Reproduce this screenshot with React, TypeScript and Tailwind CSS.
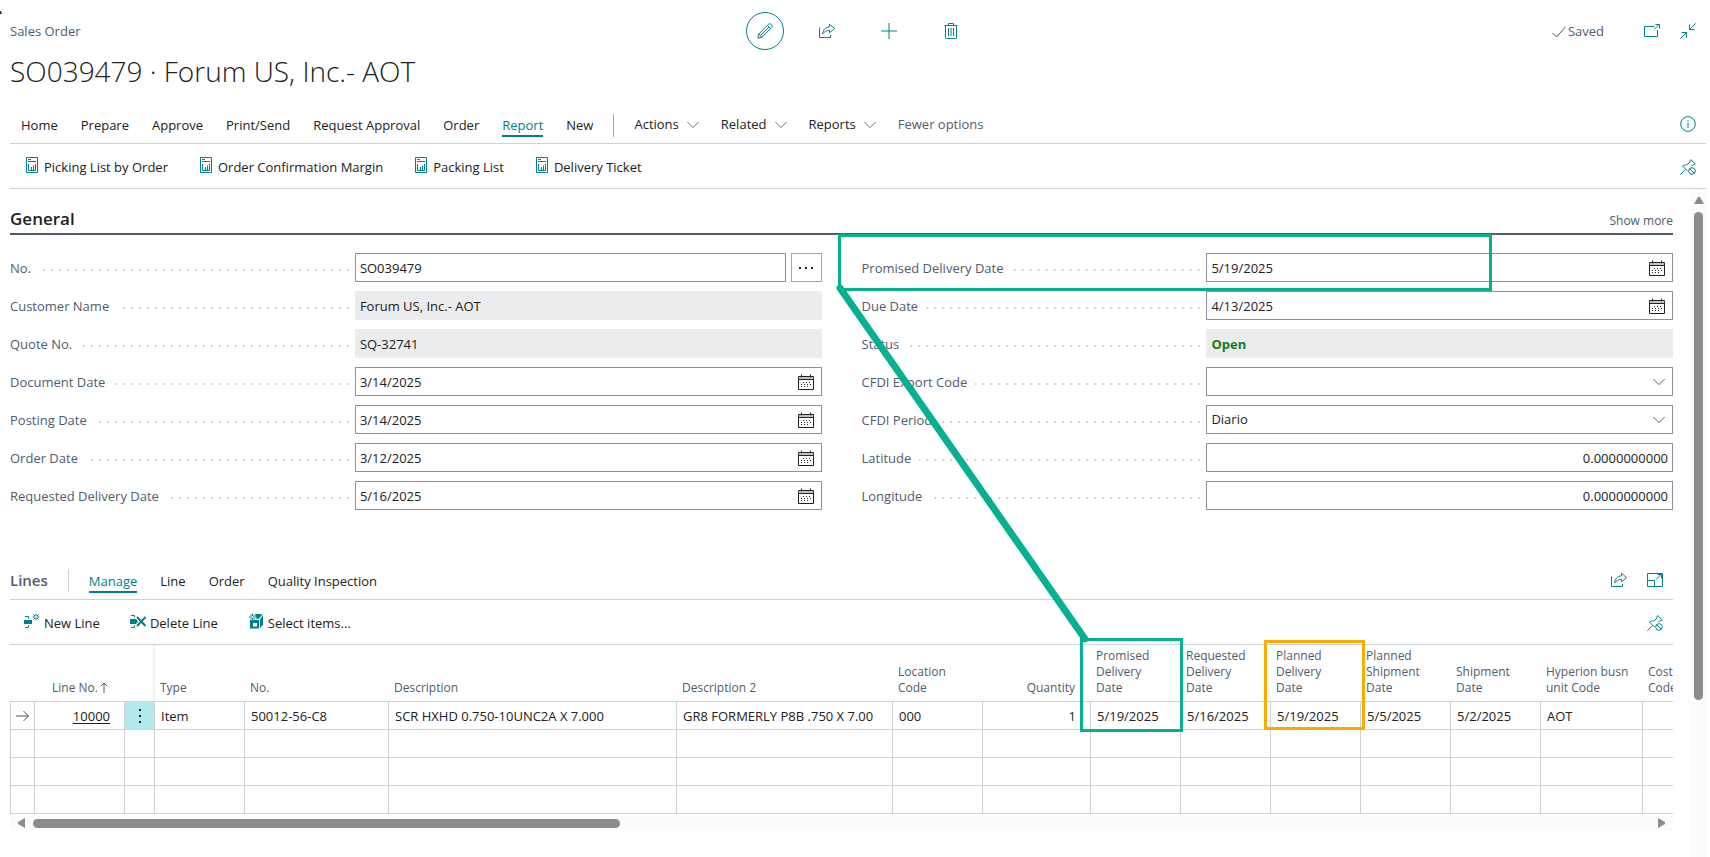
import React from 'react';
import { clsx } from 'clsx';

type FieldKind = 'text' | 'date' | 'select' | 'readonly' | 'number' | 'lookup';

interface Field {
  label: string;
  value: string;
  kind: FieldKind;
  strong?: boolean;
}

interface Column {
  title: string;
  value: string;
  width: string;
  align?: 'right';
}

const leftFields: Field[] = [
  { label: 'No.', value: 'SO039479', kind: 'lookup' },
  { label: 'Customer Name', value: 'Forum US, Inc.- AOT', kind: 'readonly' },
  { label: 'Quote No.', value: 'SQ-32741', kind: 'readonly' },
  { label: 'Document Date', value: '3/14/2025', kind: 'date' },
  { label: 'Posting Date', value: '3/14/2025', kind: 'date' },
  { label: 'Order Date', value: '3/12/2025', kind: 'date' },
  { label: 'Requested Delivery Date', value: '5/16/2025', kind: 'date' },
];

const rightFields: Field[] = [
  { label: 'Promised Delivery Date', value: '5/19/2025', kind: 'date' },
  { label: 'Due Date', value: '4/13/2025', kind: 'date' },
  { label: 'Status', value: 'Open', kind: 'readonly', strong: true },
  { label: 'CFDI Export Code', value: '', kind: 'select' },
  { label: 'CFDI Period', value: 'Diario', kind: 'select' },
  { label: 'Latitude', value: '0.0000000000', kind: 'number' },
  { label: 'Longitude', value: '0.0000000000', kind: 'number' },
];

const columns: Column[] = [
  { title: 'Type', value: 'Item', width: 'w-[90px]' },
  { title: 'No.', value: '50012-56-C8', width: 'w-[144px]' },
  { title: 'Description', value: 'SCR HXHD 0.750-10UNC2A X 7.000', width: 'w-[288px]' },
  { title: 'Description 2', value: 'GR8 FORMERLY P8B .750 X 7.00', width: 'w-[216px]' },
  { title: 'Location\nCode', value: '000', width: 'w-[90px]' },
  { title: 'Quantity', value: '1', width: 'w-[108px]', align: 'right' },
  { title: 'Promised\nDelivery\nDate', value: '5/19/2025', width: 'w-[90px]' },
  { title: 'Requested\nDelivery\nDate', value: '5/16/2025', width: 'w-[90px]' },
  { title: 'Planned\nDelivery\nDate', value: '5/19/2025', width: 'w-[90px]' },
  { title: 'Planned\nShipment\nDate', value: '5/5/2025', width: 'w-[90px]' },
  { title: 'Shipment\nDate', value: '5/2/2025', width: 'w-[90px]' },
  { title: 'Hyperion busn\nunit Code', value: 'AOT', width: 'w-[102px]' },
  { title: 'Cost\nCode', value: '', width: 'w-[90px]' },
];

const tabs = ['Home', 'Prepare', 'Approve', 'Print/Send', 'Request Approval', 'Order', 'Report', 'New'];
const menus = ['Actions', 'Related', 'Reports'];
const reports = ['Picking List by Order', 'Order Confirmation Margin', 'Packing List', 'Delivery Ticket'];
const lineTabs = ['Manage', 'Line', 'Order', 'Quality Inspection'];

function Svg({ children, className = 'size-4' }: { children: React.ReactNode; className?: string }) {
  return (
    <svg viewBox="0 0 16 16" fill="none" stroke="currentColor" className={clsx('shrink-0', className)} aria-hidden="true">
      {children}
    </svg>
  );
}

const PencilIcon = () => (
  <Svg>
    <path d="M.8 15.2l1-4.2L11.6 1.2a1.6 1.6 0 0 1 2.3 0l.9.9a1.6 1.6 0 0 1 0 2.3L5 14.2l-4.2 1zM10.4 2.4l3.2 3.2M1.8 11L5 14.2M4 12l7.6-7.6" />
  </Svg>
);

const ShareIcon = () => (
  <Svg>
    <path d="M.5 4.5v10h11v-2.5" />
    <path d="M10.5 1.2l5 4.3-5 4.3V7.4C7.6 7.4 5.6 8.6 3.6 11c.5-4 2.6-6.8 6.9-7.2z" />
  </Svg>
);

const PlusIcon = () => (
  <Svg>
    <path d="M8 0v16M0 8h16" />
  </Svg>
);

const TrashIcon = () => (
  <Svg>
    <path d="M1.5 2.5h13M5.5 2.5v-2h5v2M2.5 2.5v12a1 1 0 0 0 1 1h9a1 1 0 0 0 1-1v-12M5.5 5v8M8 5v8M10.5 5v8" />
  </Svg>
);

const PopOutIcon = () => (
  <Svg>
    <path d="M10.5 3.5H.5v10h13V7M10 6.5l5-5M11.5 1.5h4v4" />
  </Svg>
);

const CollapseIcon = () => (
  <Svg>
    <path d="M15.7.3L9.8 6.2M9.5 1.5v5h5M.3 15.7l5.9-5.9M1.5 9.5h5v5" />
  </Svg>
);

const InfoIcon = () => (
  <Svg>
    <circle cx="8" cy="8" r="7.3" />
    <path d="M8 6.5v5.5M8 4v1.2" />
  </Svg>
);

const UnpinIcon = () => (
  <Svg>
    <path d="M.3 15.7l5-5M7.5 12L2.5 7c1.3-.9 2.800-1.200 4.200-1L10 3.200c-.2-1 0-1.900.7-2.700L15.300 5c-.8.8-1.700 1-2.600.9L11.500 7.200" />
    <circle cx="12" cy="12" r="3.300" />
    <path d="M9.800 9.800l4.400 4.400" />
  </Svg>
);

const ExpandIcon = () => (
  <Svg>
    <path d="M.5 8.500v-7h15v13h-8M.5 8.500h7v6h-7zM9 7.500l5-5M10.500 2.500h4v4" />
  </Svg>
);

const ReportIcon = () => (
  <Svg>
    <path d="M2.500.5h11v15h-11z" />
    <path d="M4 2.500h3M4 4.500h8M4.500 7v6.500h7V7M7.500 10v3.500M9.500 8.500v5" />
  </Svg>
);

const ChevronIcon = () => (
  <Svg className="size-3">
    <path d="M.5 4l7.500 7.500L15.500 4" strokeWidth="1.300" />
  </Svg>
);

const CalendarIcon = () => (
  <Svg>
    <path d="M.5 2.500h15v13H.5zM.5 5.500h15M3.500.5v3M12.500.5v3" />
    <path d="M.5 4h15" stroke="#8a8a8a" />
    <path d="M5 8.500h9M3 10.500h11M3 12.500h9" strokeDasharray="1 2" />
  </Svg>
);

const NewLineIcon = () => (
  <Svg>
    <path d="M1 3.500h3.500v2M1 14.500h3.500v-2" />
    <path d="M0 7h8v4H0z" fill="currentColor" stroke="none" />
    <path d="M12 .5v7M8.500 4h7M9.500 1.500l5 5M14.500 1.500l-5 5" />
    <circle cx="12" cy="4" r="1" fill="white" stroke="none" />
  </Svg>
);

const DeleteLineIcon = () => (
  <Svg>
    <path d="M1 2.500h3.500v2M1 14.500h3.500v-2" />
    <path d="M0 6h6l2 2.500L6 11H0z" fill="currentColor" stroke="none" />
    <path d="M7 4l8.500 9M15.500 4L7 13" strokeWidth="2" />
  </Svg>
);

const SelectItemsIcon = () => (
  <Svg>
    <path d="M2 7h9v8.500H2z" fill="currentColor" stroke="none" />
    <path d="M12 6.500L15 2v9.500l-3 4z" fill="currentColor" stroke="none" />
    <path d="M7 1h7.500L11 5.800H8.500z" fill="currentColor" stroke="none" />
    <path d="M5 10h4v3.500H5z" fill="white" stroke="none" />
    <path d="M4.500.5v7M1 4h7M2 1.500l5 5M7 1.500l-5 5" />
    <circle cx="4.500" cy="4" r="1" fill="white" stroke="none" />
  </Svg>
);

function Tab({ label, active }: { label: string; active?: boolean }) {
  return (
    <button
      className={clsx(
        'cursor-pointer border-b-2 leading-5 whitespace-nowrap',
        active ? 'border-[#008089] text-[#008089]' : 'border-transparent',
      )}
    >
      {label}
    </button>
  );
}

function ActionButton({ label, icon }: { label: string; icon: React.ReactNode }) {
  return (
    <button className="flex cursor-pointer items-center gap-1 leading-5 whitespace-nowrap">
      <span className="pb-1 text-[#008089]">{icon}</span>
      {label}
    </button>
  );
}

function FieldRow({ field }: { field: Field }) {
  const id = field.label.toLowerCase().replace(/[^a-z]+/g, '-');
  const boxed = 'flex h-[29px] min-w-0 flex-1 items-center border border-[#8a929d] bg-white';
  const input = 'h-full w-full min-w-0 bg-transparent px-1 outline-none';

  return (
    <div className="grid grid-cols-[17fr_23fr] items-center">
      <div className="flex items-center pt-0.5">
        <label htmlFor={id} className="pr-2 whitespace-nowrap text-[#505c6d]">
          {field.label}
        </label>
        <span className="mt-0.5 mr-1.5 h-0.5 flex-1 bg-[linear-gradient(to_left,#d2d2d4_2px,transparent_2px)] bg-[length:8px_2px] bg-right bg-repeat-x" />
      </div>

      {field.kind === 'lookup' && (
        <div className="flex gap-[5px]">
          <div className={boxed}>
            <input id={id} defaultValue={field.value} className={input} />
          </div>
          <button aria-label="Assist edit" className="flex w-[31px] cursor-pointer items-center justify-center gap-1 border border-[#a6a6aa]">
            <span className="size-0.5 bg-[#212121]" />
            <span className="size-0.5 bg-[#212121]" />
            <span className="size-0.5 bg-[#212121]" />
          </button>
        </div>
      )}

      {field.kind === 'readonly' && (
        <input
          id={id}
          readOnly
          defaultValue={field.value}
          className={clsx(
            'h-[29px] w-full min-w-0 bg-[#ebecee] px-[5px] outline-none',
            field.strong && 'font-bold text-[#1a7a1a]',
          )}
        />
      )}

      {field.kind === 'date' && (
        <div className={boxed}>
          <input id={id} defaultValue={field.value} className={input} />
          <button aria-label={`Choose ${field.label}`} className="cursor-pointer pr-[7px]">
            <CalendarIcon />
          </button>
        </div>
      )}

      {field.kind === 'select' && (
        <div className={clsx(boxed, 'relative')}>
          <select id={id} defaultValue={field.value} className="h-full w-full appearance-none bg-transparent px-1 outline-none">
            <option>{field.value}</option>
          </select>
          <span className="pointer-events-none absolute right-[7px] text-[#505c6d]">
            <ChevronIcon />
          </span>
        </div>
      )}

      {field.kind === 'number' && (
        <div className={boxed}>
          <input id={id} defaultValue={field.value} className={clsx(input, 'text-right')} />
        </div>
      )}
    </div>
  );
}

function LinesTable() {
  const cell = 'h-7 truncate border-r border-b border-[#cfd1d6] px-1.5 leading-5';
  const head = 'border-b border-[#cfd1d6] px-[5px] pb-[5px] align-bottom font-normal leading-4 whitespace-pre-line';

  return (
    <div className="overflow-hidden">
      <table className="w-[1713px] table-fixed border-separate border-spacing-0 text-left">
        <thead className="text-xs text-[#505c6d]">
          <tr className="h-[57px]">
            <th className={clsx(head, 'w-[25px]')} />
            <th className={clsx(head, 'w-[90px] text-right')}>
              <span className="inline-flex items-center gap-0.5 pr-3">
                Line No.
                <svg viewBox="0 0 8 12" className="h-3 w-2" fill="none" stroke="currentColor" aria-hidden="true">
                  <path d="M4 11V1M1 4l3-3 3 3" />
                </svg>
              </span>
            </th>
            <th className={clsx(head, 'w-[30px] border-r-2 border-r-[#f1f1f4]')} />
            {columns.map((c) => (
              <th key={c.title} className={clsx(head, c.width, c.align === 'right' && 'pr-4 text-right')}>
                {c.title}
              </th>
            ))}
          </tr>
        </thead>
        <tbody>
          <tr>
            <td className={clsx(cell, 'border-l px-[5px]')}>
              <svg viewBox="0 0 14 12" className="h-3 w-3.5" fill="none" stroke="#505050" aria-hidden="true">
                <path d="M0 6h12.500M7.500 1l5 5-5 5" />
              </svg>
            </td>
            <td className={clsx(cell, 'text-right')}>
              <a href="#line-10000" className="mr-2 underline underline-offset-2">10000</a>
            </td>
            <td className={clsx(cell, 'bg-[#b2e9ec]')}>
              <button aria-label="Row options" className="flex w-full cursor-pointer flex-col items-center gap-1">
                <span className="size-0.5 bg-[#212121]" />
                <span className="size-0.5 bg-[#212121]" />
                <span className="size-0.5 bg-[#212121]" />
              </button>
            </td>
            {columns.map((c) => (
              <td key={c.title} className={clsx(cell, c.align === 'right' && 'pr-3.5 text-right')}>
                {c.value}
              </td>
            ))}
          </tr>
          {[1, 2, 3].map((n) => (
            <tr key={n}>
              <td className={clsx(cell, 'border-l')} />
              <td className={cell} />
              <td className={cell} />
              {columns.map((c) => (
                <td key={c.title} className={cell} />
              ))}
            </tr>
          ))}
        </tbody>
      </table>
    </div>
  );
}

// Highlight boxes and the connector drawn on top of the page
function Callouts() {
  return (
    <svg className="pointer-events-none absolute top-0 left-0 h-[857px] w-[1710px]" fill="none" aria-hidden="true">
      <path d="M0 11h1l1 3H0z" fill="#333" />
      <rect x="839.500" y="235.500" width="651" height="54" stroke="#06b090" strokeWidth="3" />
      <path d="M840 288L1085 639" stroke="#06b090" strokeWidth="7" strokeLinecap="round" />
      <rect x="1081.500" y="639.500" width="100" height="91" stroke="#06b090" strokeWidth="3" />
      <rect x="1265.500" y="641.500" width="98" height="87" stroke="#faab00" strokeWidth="3" />
    </svg>
  );
}

export default function App() {
  return (
    <div className="relative flex h-screen flex-col overflow-hidden bg-white pr-1 pl-2.5 font-['Open_Sans','Noto_Sans',sans-serif] text-[13px] text-[#212121]">
      <header className="grid grid-cols-[1fr_auto_1fr] items-center pt-3 text-[#505c6d]">
        <span className="pt-0.5">Sales Order</span>
        <div className="flex gap-6 text-[#008089]">
          <button aria-label="Edit" className="flex size-[38px] cursor-pointer items-center justify-center rounded-full border border-[#008089]">
            <PencilIcon />
          </button>
          <button aria-label="Share" className="flex size-[38px] cursor-pointer items-center justify-center">
            <ShareIcon />
          </button>
          <button aria-label="New" className="flex size-[38px] cursor-pointer items-center justify-center">
            <PlusIcon />
          </button>
          <button aria-label="Delete" className="flex size-[38px] cursor-pointer items-center justify-center">
            <TrashIcon />
          </button>
        </div>
        <div className="flex items-center justify-end gap-5 pr-2.5">
          <span className="mr-5 flex items-center gap-0.5 pt-0.5">
            <svg viewBox="0 0 14 12" className="h-3 w-3.5" fill="none" stroke="currentColor" aria-hidden="true">
              <path d="M.5 7l4 4L13.500.8" />
            </svg>
            Saved
          </span>
          <button aria-label="Open in new window" className="cursor-pointer text-[#008089]">
            <PopOutIcon />
          </button>
          <button aria-label="Collapse" className="cursor-pointer text-[#008089]">
            <CollapseIcon />
          </button>
        </div>
      </header>

      <h1 className="mt-0.5 text-[28px] leading-[38px] font-light">SO039479 · Forum US, Inc.- AOT</h1>

      <nav className="mt-[17px] flex h-[37px] shrink-0 items-center gap-5 border-b border-[#cfd1d6] pr-2.5 pl-[11px]">
        <div className="flex gap-[23px] pt-0.5">
          {tabs.map((t) => (
            <Tab key={t} label={t} active={t === 'Report'} />
          ))}
        </div>
        <span className="h-[23px] w-px bg-[#a0a7b3]" />
        <div className="flex gap-[22px]">
          {menus.map((m) => (
            <button key={m} className="flex cursor-pointer items-center gap-2">
              {m}
              <span className="text-[#707070]">
                <ChevronIcon />
              </span>
            </button>
          ))}
          <button className="cursor-pointer text-[#505c6d]">Fewer options</button>
        </div>
        <button aria-label="Details" className="ml-auto cursor-pointer pb-0.5 text-[#008089]">
          <InfoIcon />
        </button>
      </nav>

      <div className="flex h-[45px] shrink-0 items-center gap-[30px] border-b border-[#cfd1d6] pt-0.5 pr-2.5 pl-3.5">
        {reports.map((r) => (
          <ActionButton key={r} label={r} icon={<ReportIcon />} />
        ))}
        <button aria-label="Unpin actions" className="ml-auto cursor-pointer text-[#008089]">
          <UnpinIcon />
        </button>
      </div>

      <div className="flex min-h-0 flex-1 gap-[18px]">
        <main className="min-w-0 flex-1">
          <section>
            <div className="flex items-baseline justify-between border-b-2 border-[#505c6d] pt-[18px] pb-0.5">
              <h2 className="text-[17px] leading-6 font-semibold">General</h2>
              <button className="cursor-pointer text-xs text-[#505c6d]">Show more</button>
            </div>
            <div className="mt-[18px] grid grid-cols-2 gap-x-10">
              <div className="flex flex-col gap-[9px]">
                {leftFields.map((f) => (
                  <FieldRow key={f.label} field={f} />
                ))}
              </div>
              <div className="flex flex-col gap-[9px]">
                {rightFields.map((f) => (
                  <FieldRow key={f.label} field={f} />
                ))}
              </div>
            </div>
          </section>

          <section className="mt-13">
            <div className="flex h-[38px] items-center gap-5 border-b border-[#cfd1d6] pr-2.5">
              <h2 className="text-[15px] font-semibold text-[#505c6d]">Lines</h2>
              <span className="h-[23px] w-px bg-[#cfd1d6]" />
              <div className="flex gap-[23px] pt-0.5">
                {lineTabs.map((t) => (
                  <Tab key={t} label={t} active={t === 'Manage'} />
                ))}
              </div>
              <div className="ml-auto flex gap-5 pb-0.5 text-[#008089]">
                <button aria-label="Share lines" className="cursor-pointer">
                  <ShareIcon />
                </button>
                <button aria-label="Expand lines" className="cursor-pointer">
                  <ExpandIcon />
                </button>
              </div>
            </div>
            <div className="flex h-[45px] items-center gap-[30px] border-b border-[#cfd1d6] pt-0.5 pr-2.5 pl-3.5">
              <ActionButton label="New Line" icon={<NewLineIcon />} />
              <ActionButton label="Delete Line" icon={<DeleteLineIcon />} />
              <ActionButton label="Select items..." icon={<SelectItemsIcon />} />
              <button aria-label="Unpin line actions" className="ml-auto cursor-pointer text-[#008089]">
                <UnpinIcon />
              </button>
            </div>

            <LinesTable />

            <div className="mt-0.5 flex h-3.5 items-center gap-2 bg-[#fbfbfb] px-2">
              <svg viewBox="0 0 7 10" className="h-2.5 w-[7px]" fill="#8b8b8b" aria-hidden="true">
                <path d="M7 0v10L0 6V4z" />
              </svg>
              <div className="flex-1">
                <div className="h-[9px] w-[36.3%] rounded-full bg-[#8b8b8b]" />
              </div>
              <svg viewBox="0 0 7 10" className="h-2.5 w-[7px]" fill="#8b8b8b" aria-hidden="true">
                <path d="M0 0v10l7-4V4z" />
              </svg>
            </div>
          </section>
        </main>

        <div className="flex w-[15px] flex-col items-center gap-2 bg-[#fbfbfb] pt-2">
          <svg viewBox="0 0 10 7" className="h-[7px] w-2.5 shrink-0" fill="#8b8b8b" aria-hidden="true">
            <path d="M0 7h10L6 0H4z" />
          </svg>
          <div className="h-[74%] w-[9px] rounded-full bg-[#8b8b8b]" />
        </div>
      </div>

      <Callouts />
    </div>
  );
}
